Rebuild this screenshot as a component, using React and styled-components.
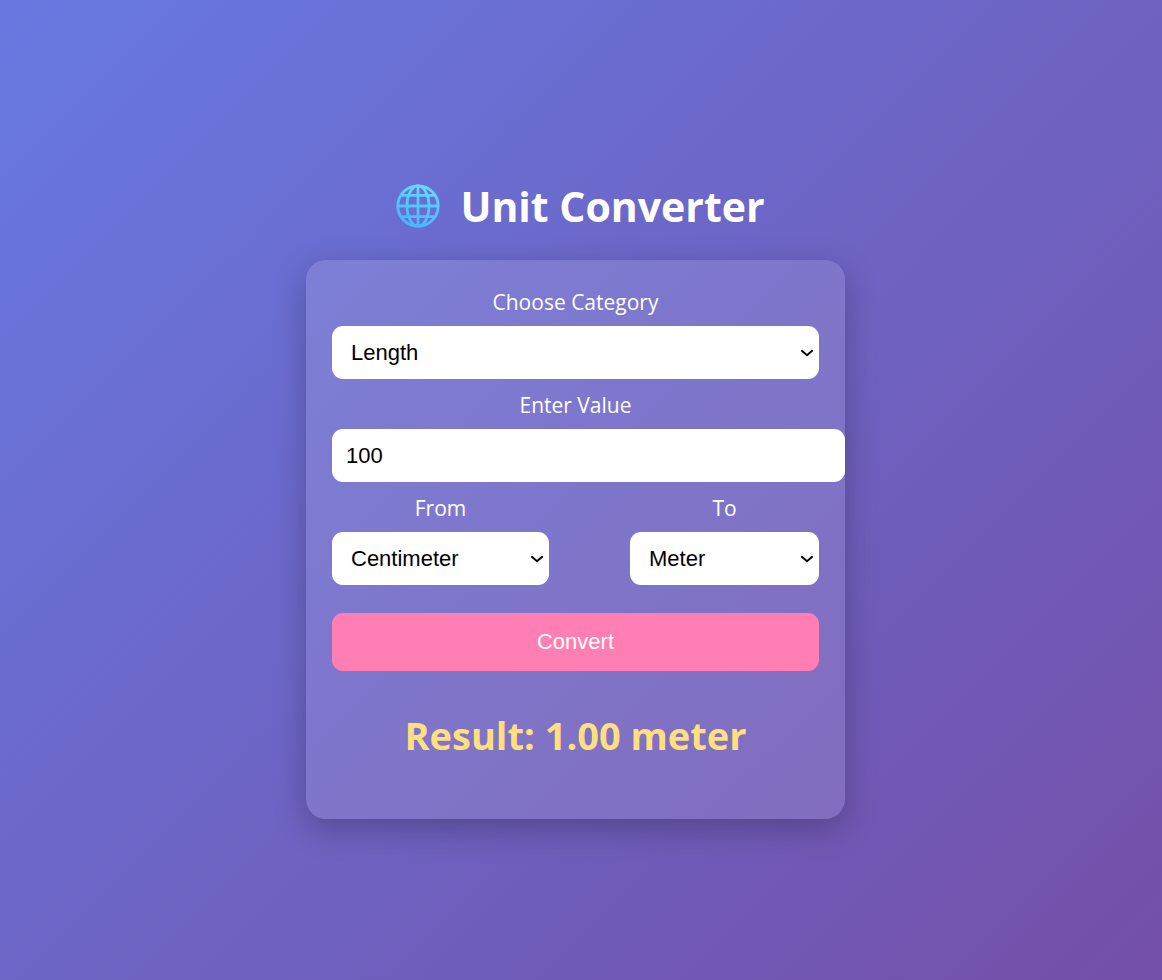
import React, { useState } from "react";
import styled, { createGlobalStyle } from "styled-components";

const GlobalStyle = createGlobalStyle`
  body {
    margin: 0;
    font-family: "Open Sans", "Noto Sans", sans-serif;
  }
`;

const Page = styled.main`
  box-sizing: border-box;
  min-height: 100vh;
  padding-right: 11px;
  display: flex;
  flex-direction: column;
  align-items: center;
  justify-content: center;
  background: linear-gradient(135deg, #6779e1, #744fa8);
  color: #fff;
`;

const Title = styled.h1`
  display: flex;
  align-items: center;
  gap: 20px;
  margin: 16px 0 25px;
  padding-left: 10px;
  font-size: 41px;
  line-height: 58px;
  font-weight: 700;
`;

const Globe = styled.svg`
  width: 44px;
  height: 44px;
`;

const Card = styled.form`
  box-sizing: border-box;
  width: 100%;
  max-width: 539px;
  padding: 26px;
  border-radius: 20px;
  background: rgba(255, 255, 255, 0.12);
  box-shadow: 0 10px 32px rgba(0, 0, 0, 0.25);
`;

const Field = styled.div`
  display: flex;
  flex-direction: column;
  gap: 8px;
  margin-bottom: 10px;
`;

const Label = styled.label`
  font-size: 21px;
  line-height: 32px;
  text-align: center;
  color: #fff;
`;

const SelectBox = styled.div`
  display: grid;
  align-items: center;
  > * {
    grid-area: 1 / 1;
  }
`;

const Select = styled.select`
  appearance: none;
  width: 100%;
  height: 53px;
  padding: 0 32px 0 19px;
  border: 0;
  border-radius: 11px;
  background: #fff;
  color: #000;
  font-family: "Liberation Sans", Arial, sans-serif;
  font-size: 22px;
`;

const Chevron = styled.svg`
  justify-self: end;
  width: 14px;
  height: 10px;
  margin-right: 5px;
  pointer-events: none;
`;

const Input = styled.input`
  box-sizing: border-box;
  width: calc(100% + 26px);
  height: 53px;
  padding: 0 14px;
  border: 0;
  border-radius: 11px;
  background: #fff;
  color: #000;
  font-family: "Liberation Sans", Arial, sans-serif;
  font-size: 22px;
`;

const Row = styled.div`
  display: grid;
  grid-template-columns: 217px 189px;
  justify-content: space-between;
`;

const Button = styled.button`
  width: 100%;
  height: 58px;
  margin-top: 18px;
  border: 0;
  border-radius: 11px;
  background: #ff7eb3;
  color: #fff;
  font-family: "Liberation Sans", Arial, sans-serif;
  font-size: 22px;
  cursor: pointer;
`;

const Result = styled.h2`
  margin: 36px 0 30px;
  font-size: 38px;
  line-height: 56px;
  font-weight: 700;
  text-align: center;
  color: #ffdf7e;
`;

const UNITS = {
  Length: { Centimeter: 0.01, Meter: 1, Kilometer: 1000 },
  Weight: { Gram: 0.001, Kilogram: 1, Pound: 0.45359237 },
};

function SelectField({ id, label, value, options, onChange }) {
  return (
    <Field>
      <Label htmlFor={id}>{label}</Label>
      <SelectBox>
        <Select id={id} value={value} onChange={(e) => onChange(e.target.value)}>
          {options.map((option) => (
            <option key={option}>{option}</option>
          ))}
        </Select>
        <Chevron viewBox="0 0 14 10" fill="none" stroke="#000" strokeWidth="2" aria-hidden="true">
          <path d="M1.300 2.200 7 7.200l5.700-5" />
        </Chevron>
      </SelectBox>
    </Field>
  );
}

export default function App() {
  const [category, setCategory] = useState("Length");
  const [amount, setAmount] = useState("100");
  const [from, setFrom] = useState("Centimeter");
  const [to, setTo] = useState("Meter");
  const [result, setResult] = useState("Result: 1.00 meter");
  const units = UNITS[category];

  const changeCategory = (next) => {
    const names = Object.keys(UNITS[next]);
    setCategory(next);
    setFrom(names[0]);
    setTo(names[1]);
  };

  const convert = (event) => {
    event.preventDefault();
    const converted = (Number(amount) * units[from]) / units[to];
    setResult(`Result: ${converted.toFixed(2)} ${to.toLowerCase()}`);
  };

  return (
    <>
      <GlobalStyle />
      <Page>
        <Title>
          <Globe viewBox="0 0 44 44" fill="none" stroke="url(#globe)" strokeWidth="2.800" aria-hidden="true">
            <defs>
              <linearGradient id="globe" gradientUnits="userSpaceOnUse" x1="28" y1="0" x2="14" y2="44">
                <stop offset="0" stopColor="#68dcff" />
                <stop offset="0.500" stopColor="#52c6fd" />
                <stop offset="1" stopColor="#45b6fb" />
              </linearGradient>
            </defs>
            <circle cx="22" cy="22" r="20.200" />
            <ellipse cx="22" cy="22" rx="11" ry="20.200" />
            <path d="M22 2v40M2 22h40M6 11.300h32M6 32.700h32" />
          </Globe>
          Unit Converter
        </Title>
        <Card onSubmit={convert}>
          <SelectField
            id="category"
            label="Choose Category"
            value={category}
            options={Object.keys(UNITS)}
            onChange={changeCategory}
          />
          <Field>
            <Label htmlFor="amount">Enter Value</Label>
            <Input id="amount" inputMode="decimal" value={amount} onChange={(e) => setAmount(e.target.value)} />
          </Field>
          <Row>
            <SelectField id="from" label="From" value={from} options={Object.keys(units)} onChange={setFrom} />
            <SelectField id="to" label="To" value={to} options={Object.keys(units)} onChange={setTo} />
          </Row>
          <Button type="submit">Convert</Button>
          <Result>{result}</Result>
        </Card>
      </Page>
    </>
  );
}
